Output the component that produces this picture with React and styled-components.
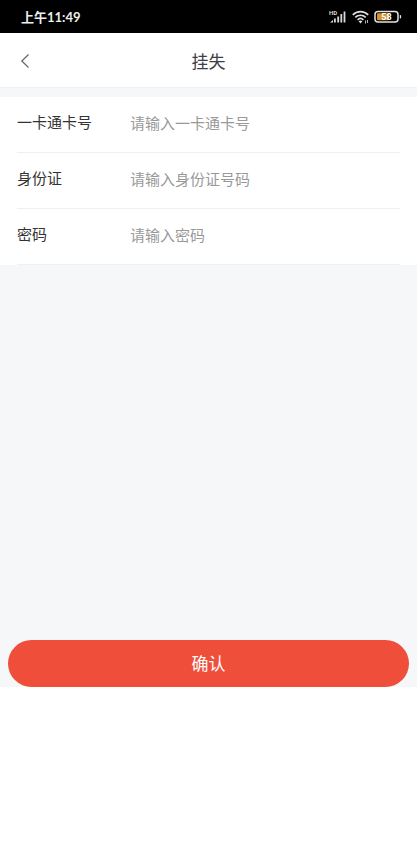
import React, { useState } from "react";

import styled, { createGlobalStyle } from "styled-components";

const fields = [
  { id: "card", label: "一卡通卡号", placeholder: "请输入一卡通卡号", type: "text" },
  { id: "identity", label: "身份证", placeholder: "请输入身份证号码", type: "text" },
  { id: "password", label: "密码", placeholder: "请输入密码", type: "password" },
];

const SignalIcon = () => (
  <svg width="18" height="16" viewBox="0 0 18 16" aria-hidden="true">
    <text x="0" y="6" fill="#d8d8d8" fontFamily="Roboto, sans-serif" fontSize="6" fontWeight="700">
      HD
    </text>
    <path
      d="M1 13.5l3-2.5V13.5zM5 9.5h1.8V13.5H5zM8.3 7.5h1.8v6H8.3zM11.4 5h1.8v8.5h-1.8zM14.6 2.5h1.8v11h-1.8z"
      fill="#d8d8d8"
    />
  </svg>
);

const WifiIcon = () => (
  <svg width="17" height="16" viewBox="0 0 17 16" aria-hidden="true">
    <g fill="none" stroke="#dedede" strokeWidth="1.7">
      <path d="M0.8 5.9C5 1.5 12 1.5 16.2 5.9" />
      <path d="M3.3 8.4C6.2 5.5 10.8 5.5 13.7 8.4" />
      <path d="M5.6 10.8C7.3 9.2 9.7 9.2 11.4 10.8" />
    </g>
    <path d="M8.5 14.5L6.6 12.2C7.7 11.3 9.3 11.3 10.4 12.2Z" fill="#dedede" />
    <path d="M13.5 11.5V14.5M15.5 11V14" stroke="#b8b8b8" strokeWidth="1" />
  </svg>
);

const BatteryIcon = () => (
  <svg width="28" height="16" viewBox="0 0 28 16" aria-hidden="true">
    <rect x="1" y="2.5" width="23" height="10.5" rx="3" fill="#000" stroke="#e2e2e2" strokeWidth="1.5" />
    <rect x="3" y="4.3" width="12" height="7" rx="1" fill="#d49428" />
    <path d="M25.8 6h0.6c1 0 1 3.5 0 3.5h-0.6z" fill="#e2e2e2" />
    <text x="12.5" y="11.2" textAnchor="middle" fill="#fff" fontFamily="Roboto, sans-serif" fontSize="9" fontWeight="700">
      58
    </text>
  </svg>
);

const App = () => {
  const [values, setValues] = useState({ card: "", identity: "", password: "" });

  const handleChange = (e) => {
    setValues({ ...values, [e.target.name]: e.target.value });
  };

  return (
    <>
      <GlobalStyle />
      <StatusBar>
        <Time>上午11:49</Time>
        <StatusIcons>
          <SignalIcon />
          <WifiIcon />
          <BatteryIcon />
        </StatusIcons>
      </StatusBar>
      <Header>
        <BackButton type="button" aria-label="返回">
          <svg width="10" height="16" viewBox="0 0 10 16" aria-hidden="true">
            <path d="M8.5 1.5L1.8 8L8.5 14.5" fill="none" stroke="#666" strokeWidth="1.2" />
          </svg>
        </BackButton>
        <Title>挂失</Title>
      </Header>
      <Form onSubmit={(e) => e.preventDefault()}>
        <FieldList>
          {fields.map(({ id, label, placeholder, type }) => (
            <Field key={id}>
              <Label htmlFor={id}>{label}</Label>
              <Input
                id={id}
                name={id}
                type={type}
                placeholder={placeholder}
                value={values[id]}
                onChange={handleChange}
              />
            </Field>
          ))}
        </FieldList>
        <SubmitButton type="submit">确认</SubmitButton>
      </Form>
    </>
  );
};

export default App;

/******************/
/***** Styles *****/
/******************/

const GlobalStyle = createGlobalStyle`
  * {
    box-sizing: border-box;
  }

  body {
    margin: 0;
    background: #fff;
    font-family: "Noto Sans CJK SC", sans-serif;
  }

  button,
  input {
    font-family: inherit;
  }
`;

const StatusBar = styled.div`
  display: flex;
  align-items: center;
  justify-content: space-between;
  height: 33px;
  padding: 0 15px 0 21px;
  background: #000;
`;

const Time = styled.span`
  color: #eee;
  font-family: Lato, "Noto Sans CJK SC", sans-serif;
  font-size: 13px;
  font-weight: 700;
  line-height: 20px;
`;

const StatusIcons = styled.div`
  display: flex;
  align-items: center;
  gap: 5px;
`;

const Header = styled.header`
  display: grid;
  grid-template-columns: 50px 1fr 50px;
  align-items: center;
  height: 54px;
  padding-top: 2px;
`;

const BackButton = styled.button`
  display: flex;
  align-items: center;
  justify-content: center;
  height: 44px;
  padding: 0;
  border: 0;
  background: none;
  cursor: pointer;
`;

const Title = styled.h1`
  margin: 0;
  color: #3c4046;
  font-size: 17px;
  font-weight: 400;
  line-height: 24px;
  text-align: center;
`;

const Form = styled.form`
  display: flex;
  flex-direction: column;
  min-height: 600px;
  padding-top: 9px;
  background: #f6f7f9;
  border-top: 1px solid #f2f2f2;
`;

const FieldList = styled.div`
  padding: 0 17px;
  background: #fff;
`;

const Field = styled.div`
  display: flex;
  align-items: center;
  height: 56px;
  padding-bottom: 4px;
  border-bottom: 1px solid #f0f0f0;
`;

const Label = styled.label`
  flex: 0 0 113px;
  padding-bottom: 2px;
  color: #333;
  font-size: 15px;
  line-height: 22px;
`;

const Input = styled.input`
  flex: 1;
  min-width: 0;
  height: 40px;
  padding: 0;
  border: 0;
  outline: none;
  background: none;
  color: #333;
  font-size: 15px;

  &::placeholder {
    color: #999;
    opacity: 1;
  }
`;

const SubmitButton = styled.button`
  height: 47px;
  margin: auto 8px 0;
  padding: 0 0 2px;
  border: 0;
  border-radius: 24px;
  background: #ef4e3a;
  color: #fff;
  font-size: 17px;
  cursor: pointer;
`;
